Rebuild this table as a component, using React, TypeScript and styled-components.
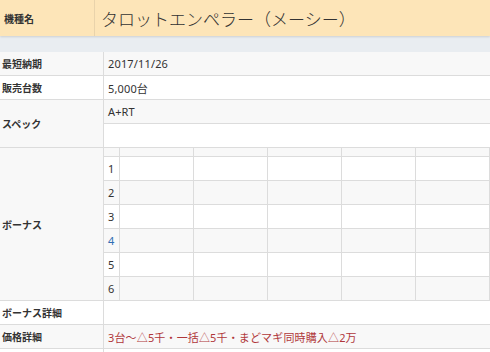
import React from 'react';
import styled, { createGlobalStyle } from 'styled-components';

const GlobalStyle = createGlobalStyle`
    body {
        margin: 0;
        background: #ffffff;
        font-family: "Noto Sans", "Noto Sans CJK JP", sans-serif;
        color: #333333;
    }
`;

const Page = styled.div`
    width: 490px;
    height: 352px;
    overflow: hidden;
`;

const Header = styled.div`
    display: flex;
    align-items: stretch;
    height: 36px;
    background-color: #fde5b8;
    box-shadow: 0 1px 2px rgba(0, 0, 0, 0.12);
    position: relative;
`;

const HeaderLabel = styled.div`
    width: 95px;
    box-sizing: border-box;
    border-right: 1px solid #e9d3ab;
    display: flex;
    align-items: center;
    padding-left: 4px;
    font-family: "Noto Sans CJK JP", sans-serif;
    font-size: 10px;
    font-weight: 700;
`;

const Title = styled.h1`
    margin: 0;
    padding-left: 6px;
    display: flex;
    align-items: center;
    font-family: "Noto Sans CJK JP", sans-serif;
    font-size: 17px;
    font-weight: 300;
    color: #333;
`;

const Band = styled.div`
    height: 16px;
    background-color: #e9edf1;
`;

const Row = styled.div<{ $h?: number }>`
    display: flex;
    border-bottom: 1px solid #dcdcdc;
    min-height: ${({ $h }) => $h ?? 23}px;
`;

const Label = styled.div<{ $shade?: boolean }>`
    width: 104px;
    flex-shrink: 0;
    box-sizing: border-box;
    border-right: 1px solid #dcdcdc;
    background-color: ${({ $shade }) => ($shade ? '#f8f8f8' : '#fff')};
    display: flex;
    align-items: center;
    padding-left: 2px;
    font-family: "Noto Sans CJK JP", sans-serif;
    font-size: 10px;
    font-weight: 700;
`;

const Value = styled.div<{ $shade?: boolean; $red?: boolean }>`
    flex: 1;
    display: flex;
    align-items: center;
    padding-left: 4px;
    background-color: ${({ $shade }) => ($shade ? '#f8f8f8' : '#fff')};
    color: ${({ $red }) => ($red ? '#b0373a' : '#333')};
    font-size: 11px;
    letter-spacing: 0.15px;
`;

const Nested = styled.div`
    flex: 1;
    display: flex;
    flex-direction: column;
`;

const SubRow = styled.div<{ $shade?: boolean; $h?: number; $last?: boolean }>`
    display: flex;
    height: ${({ $h }) => $h ?? 23}px;
    background-color: ${({ $shade }) => ($shade ? '#f8f8f8' : '#fff')};
    border-bottom: ${({ $last }) => ($last ? 'none' : '1px solid #dcdcdc')};
    font-size: 11px;
    letter-spacing: 0.15px;
`;

const SubText = styled.div`
    display: flex;
    align-items: center;
    padding-left: 4px;
`;

const NumCell = styled.div<{ $blue?: boolean }>`
    width: 16px;
    box-sizing: border-box;
    border-right: 1px solid #dcdcdc;
    display: flex;
    align-items: center;
    padding-left: 4px;
    color: ${({ $blue }) => ($blue ? '#2f6db3' : '#333')};
`;

const Cell = styled.div`
    width: 74px;
    box-sizing: border-box;
    border-right: 1px solid #dcdcdc;
`;

const bonusRows = ['1', '2', '3', '4', '5', '6'];

function BonusLine({ num, shade, last }: { num: string; shade: boolean; last?: boolean }) {
    return (
        <SubRow $shade={shade} $last={last}>
            <NumCell $blue={num === '4'}>{num}</NumCell>
            <Cell />
            <Cell />
            <Cell />
            <Cell />
            <Cell />
        </SubRow>
    );
}

export default function App() {
    return (
        <Page>
            <GlobalStyle />
            <Header>
                <HeaderLabel>機種名</HeaderLabel>
                <Title>タロットエンペラー（メーシー）</Title>
            </Header>
            <Band />
            <Row>
                <Label $shade>最短納期</Label>
                <Value $shade>2017/11/26</Value>
            </Row>
            <Row>
                <Label>販売台数</Label>
                <Value>5,000台</Value>
            </Row>
            <Row>
                <Label $shade>スペック</Label>
                <Nested>
                    <SubRow $shade>
                        <SubText>A+RT</SubText>
                    </SubRow>
                    <SubRow $last />
                </Nested>
            </Row>
            <Row>
                <Label $shade>ボーナス</Label>
                <Nested>
                    <SubRow $shade $h={8}>
                        <NumCell />
                        <Cell />
                        <Cell />
                        <Cell />
                        <Cell />
                        <Cell />
                    </SubRow>
                    {bonusRows.map((n, i) => (
                        <BonusLine key={n} num={n} shade={i % 2 === 1} last={i === bonusRows.length - 1} />
                    ))}
                </Nested>
            </Row>
            <Row>
                <Label>ボーナス詳細</Label>
                <Value />
            </Row>
            <Row>
                <Label $shade>価格詳細</Label>
                <Value $shade $red>3台～△5千・一括△5千・まどマギ同時購入△2万</Value>
            </Row>
            <Row>
                <Label />
                <Value />
            </Row>
        </Page>
    );
}
